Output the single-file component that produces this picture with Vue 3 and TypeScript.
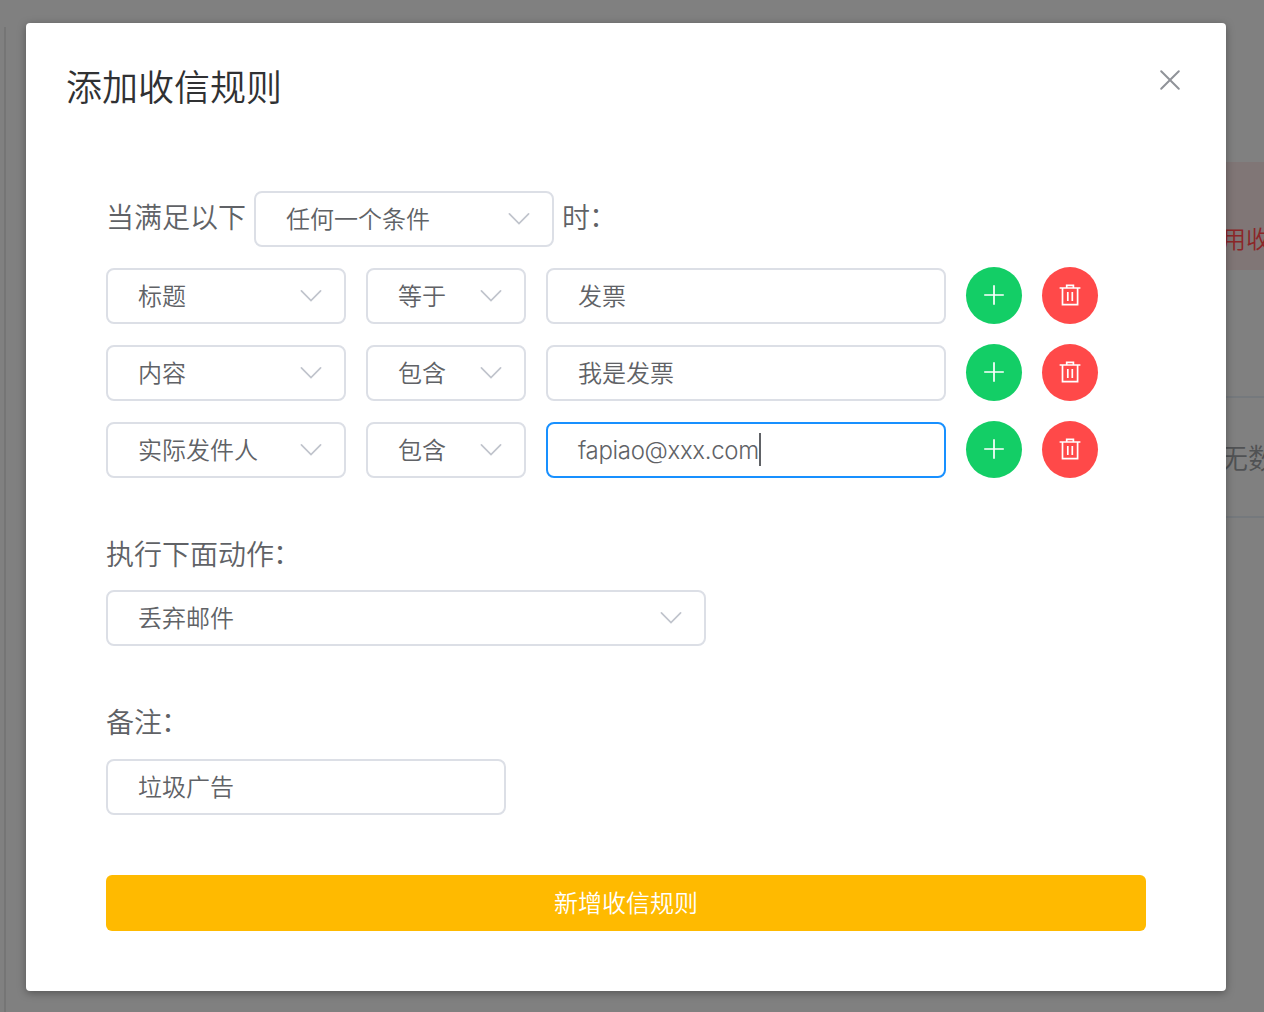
<script setup lang="ts">
interface Condition {
  field: string
  operator: string
  value: string
  focused?: boolean
}

const conditions: Condition[] = [
  { field: '标题', operator: '等于', value: '发票' },
  { field: '内容', operator: '包含', value: '我是发票' },
  { field: '实际发件人', operator: '包含', value: 'fapiao@xxx.com', focused: true },
]
</script>

<template>
  <div class="screen">
    <div class="page">
      <div class="rail"></div>
      <div class="side">
        <div class="alert"><span>用收</span></div>
        <div class="empty"><span>无数</span></div>
      </div>
    </div>
    <div class="mask">
      <section class="dialog">
        <header class="head">
          <h1>添加收信规则</h1>
          <svg class="close" viewBox="0 0 22 22" width="22" height="22">
            <path d="M2.2 2.2 19.8 19.8M19.8 2.2 2.2 19.8" />
          </svg>
        </header>

        <div class="match">
          <span class="label lead">当满足以下</span>
          <div class="box any">
            <span>任何一个条件</span>
            <svg class="arrow" viewBox="0 0 22 14" width="22" height="14"><path d="M1.4 1.8 11 11.6 20.6 1.8" /></svg>
          </div>
          <span class="label lead">时<span class="colon">：</span></span>
        </div>

        <div v-for="(c, i) in conditions" :key="i" class="row">
          <div class="box field">
            <span>{{ c.field }}</span>
            <svg class="arrow" viewBox="0 0 22 14" width="22" height="14"><path d="M1.4 1.8 11 11.6 20.6 1.8" /></svg>
          </div>
          <div class="box operator">
            <span>{{ c.operator }}</span>
            <svg class="arrow" viewBox="0 0 22 14" width="22" height="14"><path d="M1.4 1.8 11 11.6 20.6 1.8" /></svg>
          </div>
          <div class="box value" :class="{ focused: c.focused }">
            <span :class="{ latin: c.focused }">{{ c.value }}</span>
            <i v-if="c.focused" class="caret"></i>
          </div>
          <button class="round add">
            <svg viewBox="0 0 24 24" width="24" height="24"><path d="M12 2.2V21.8M2.2 12H21.8" /></svg>
          </button>
          <button class="round remove">
            <svg viewBox="0 0 24 24" width="24" height="24">
              <path d="M1.6 5H22.4M4.5 5V21.7H19.6V5M8.7 5V2.3H15.4V5M9.8 9V18M14.3 9V18" />
            </svg>
          </button>
        </div>

        <div class="label action-label">执行下面动作<span class="colon">：</span></div>
        <div class="box action">
          <span>丢弃邮件</span>
          <svg class="arrow" viewBox="0 0 22 14" width="22" height="14"><path d="M1.4 1.8 11 11.6 20.6 1.8" /></svg>
        </div>

        <div class="label note-label">备注<span class="colon">：</span></div>
        <div class="box note"><span>垃圾广告</span></div>

        <button class="submit">新增收信规则</button>
      </section>
    </div>
  </div>
</template>

<style>
body {
  background: #808080;
  overflow: hidden;
}
</style>

<style scoped>
.screen {
  position: relative;
  width: 1264px;
  height: 1012px;
  overflow: hidden;
  background: #808080;
  color: #606266;
  font-family: "Noto Sans CJK SC", sans-serif;
  font-weight: 350;
}
.screen * {
  box-sizing: border-box;
}
.page {
  display: flex;
  justify-content: space-between;
  height: 100%;
}
.rail {
  width: 2px;
  margin: 27px 0 0 4px;
  background: #757575;
}
.side {
  width: 44px;
  padding-top: 162px;
}
.alert {
  height: 108px;
  padding: 58px 0 0 2px;
  background: #807676;
  color: #8c2628;
  font-size: 24px;
  line-height: 36px;
  white-space: nowrap;
  overflow: hidden;
}
.empty {
  height: 122px;
  margin-top: 126px;
  border: solid #75797d;
  border-width: 2px 0;
  color: #505254;
  font-size: 28px;
  line-height: 119px;
  white-space: nowrap;
  overflow: hidden;
}
.mask {
  position: absolute;
  inset: 0;
  padding: 23px 26px;
}
.dialog {
  width: 1200px;
  height: 968px;
  padding: 0 80px;
  border-radius: 4px;
  background: #fff;
  box-shadow: 0 2px 8px rgba(0, 0, 0, 0.35);
}
.head {
  display: flex;
  justify-content: space-between;
  height: 168px;
  margin: 0 -40px;
  padding-top: 38px;
}
h1 {
  margin: 0;
  color: #303133;
  font-size: 36px;
  font-weight: 350;
  line-height: 48px;
}
.close {
  margin: 8px 5px 0 0;
}
svg {
  display: block;
  fill: none;
}
.close path {
  stroke: #909399;
  stroke-width: 2;
  stroke-linecap: round;
}
.match {
  display: flex;
  align-items: center;
}
.label {
  font-size: 28px;
  line-height: 40px;
  white-space: nowrap;
}
.lead {
  padding-bottom: 6px;
}
.colon {
  position: relative;
  top: -1px;
  left: -1px;
}
.box {
  display: flex;
  align-items: center;
  height: 56px;
  padding: 0 22px 0 30px;
  border: 2px solid #dcdfe6;
  border-radius: 8px;
  background: #fff;
  font-size: 24px;
  line-height: 36px;
  white-space: nowrap;
}
.box > span {
  padding-bottom: 3px;
}
.arrow {
  margin-left: auto;
}
.arrow path {
  stroke: #c0c4cc;
  stroke-width: 1.7;
  stroke-linecap: round;
}
.any {
  width: 300px;
  margin: 0 8px;
}
.row {
  display: flex;
  gap: 20px;
  align-items: flex-end;
  height: 57px;
  margin-top: 20px;
}
.field {
  width: 240px;
}
.operator {
  width: 160px;
}
.value {
  width: 400px;
}
.focused {
  border-color: #1890ff;
}
.box > .latin {
  padding: 1px 0 0;
  font-family: Inter, "Noto Sans CJK SC", sans-serif;
  font-weight: 300;
  letter-spacing: -0.33px;
}
.caret {
  width: 2px;
  height: 33px;
  margin-bottom: 2px;
  background: #606266;
}
.round {
  display: flex;
  align-items: center;
  justify-content: center;
  width: 56px;
  height: 57px;
  padding: 0 0 1px;
  border: 0;
  border-radius: 50%;
}
.round path {
  stroke: #fff;
  stroke-width: 1.7;
}
.add {
  background: #13ce66;
}
.remove {
  background: #ff4949;
}
.action-label {
  margin: 55px 0 17px;
}
.action {
  width: 600px;
}
.note-label {
  margin: 55px 0 18px;
}
.note {
  width: 400px;
}
.submit {
  display: block;
  width: 100%;
  height: 56px;
  margin-top: 60px;
  padding: 0 0 3px;
  border: 0;
  border-radius: 6px;
  background: #ffba00;
  color: #fff;
  font: inherit;
  font-size: 24px;
}
</style>
